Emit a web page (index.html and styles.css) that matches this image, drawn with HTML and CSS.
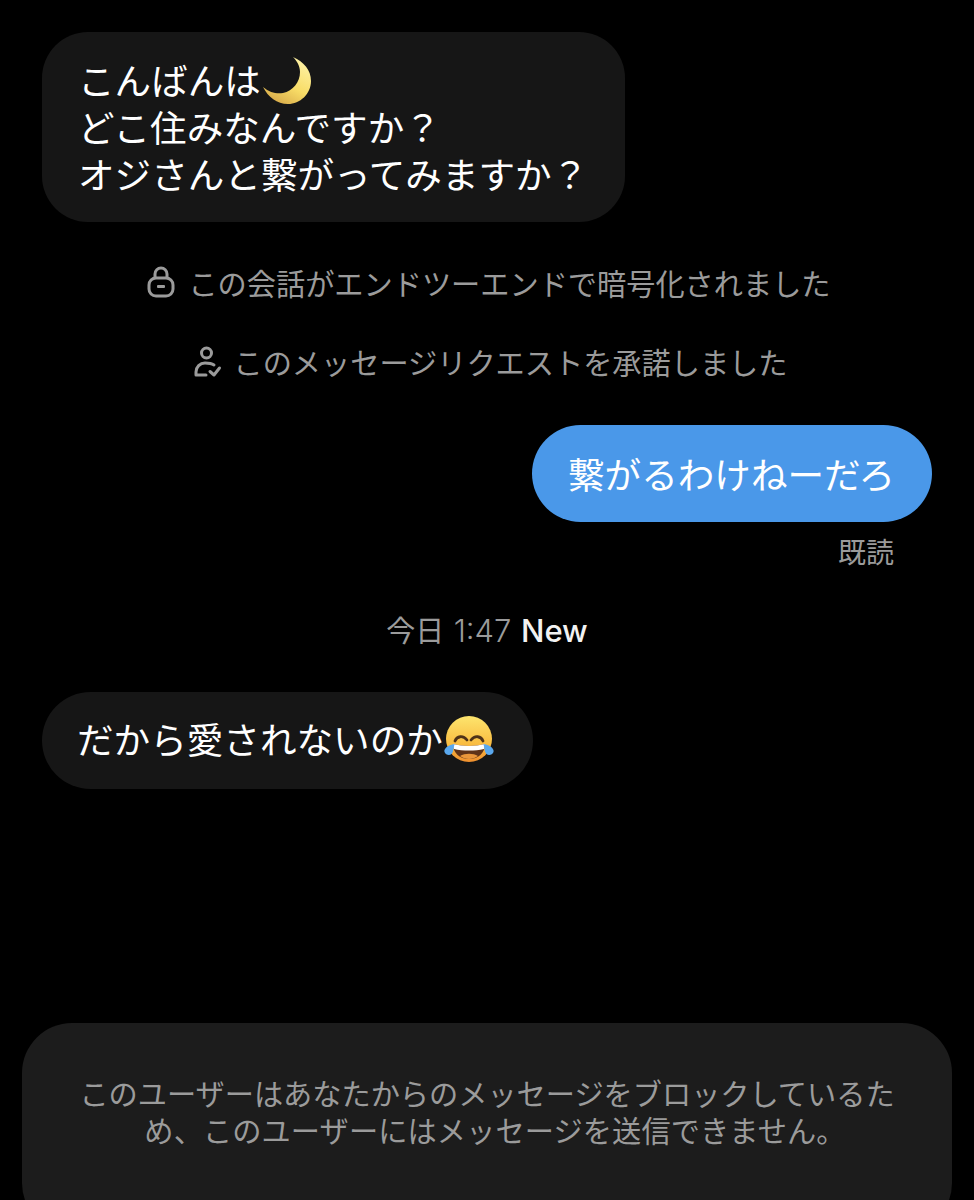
FILE: index.html
```html
<!DOCTYPE html>
<html lang="ja">
<head>
<meta charset="utf-8">
<title>メッセージ</title>
<link rel="stylesheet" href="styles.css">
</head>
<body>
<main class="chat">
  <div class="bubble incoming first">
    <div class="line">こんばんは<svg class="emoji moon" viewBox="0 0 52 52" aria-hidden="true"><defs><linearGradient id="moonFill" x1="0.8" y1="0.1" x2="0.3" y2="1"><stop offset="0" stop-color="#fdf0a0"/><stop offset="0.55" stop-color="#f8dc66"/><stop offset="1" stop-color="#d8ab4a"/></linearGradient></defs><path d="M31 2C42 7 49 15 49 26C49 39 38 49 26 49C15 49 6 42 1 32C8 38 15 39 21 38C31 36 38 27 38 17C38 11 35 6 31 2Z" fill="url(#moonFill)"/></svg></div>
    <div class="line">どこ住みなんですか？</div>
    <div class="line">オジさんと繋がってみますか？</div>
  </div>

  <div class="notice lock-notice">
    <svg class="notice-icon" viewBox="0 0 28 32" aria-hidden="true"><path d="M8 12V8a6 6 0 0 1 12 0v4" fill="none" stroke="#9b9b9b" stroke-width="3"/><rect x="2" y="12" width="24" height="18" rx="7" fill="none" stroke="#9b9b9b" stroke-width="3"/><rect x="10" y="19" width="8" height="3" rx="1" fill="#9b9b9b"/></svg>
    <span>この会話がエンドツーエンドで暗号化されました</span>
  </div>

  <div class="notice accept-notice">
    <svg class="notice-icon" viewBox="0 0 28 32" aria-hidden="true"><g fill="none" stroke="#9b9b9b" stroke-width="3" stroke-linecap="round" stroke-linejoin="round"><circle cx="13.500" cy="8" r="5"/><path d="M13 30H3v-3c0-5 4-9 9-9c3 0 6 0 9 2"/><path d="M17 26.500l4 3.500l5.500-7"/></g></svg>
    <span>このメッセージリクエストを承諾しました</span>
  </div>

  <div class="outgoing-row">
    <div class="bubble outgoing">繋がるわけねーだろ</div>
  </div>
  <div class="read-row">既読</div>

  <div class="timestamp">今日 <span class="latin">1:47</span> <strong class="latin new">New</strong></div>

  <div class="bubble incoming second">
    <div class="line">だから愛されないのか<svg class="emoji joy" viewBox="0 0 50 50" aria-hidden="true"><defs><linearGradient id="joyFill" x1="0" y1="0" x2="0" y2="1"><stop offset="0" stop-color="#fde56e"/><stop offset="0.6" stop-color="#f9bd42"/><stop offset="1" stop-color="#ee8f2e"/></linearGradient></defs><circle cx="25" cy="25" r="23" fill="url(#joyFill)"/><path d="M11 27c2-5 8-6 12-1" fill="none" stroke="#4e3218" stroke-width="2.800" stroke-linecap="round"/><path d="M27 26c4-5 10-4 12 1" fill="none" stroke="#4e3218" stroke-width="2.800" stroke-linecap="round"/><path d="M9 30c10 2.500 22 2.500 32 0c0 9-7 15-16 15S9 39 9 30Z" fill="#5e3218"/><path d="M9 30c10 2.500 22 2.500 32 0c0 2-0.300 3.500-1 5c-9 2-21 2-30 0c-0.700-1.500-1-3-1-5Z" fill="#fff"/><path d="M16 42c5-3 13-3 18 0c-5 4-13 4-18 0Z" fill="#e9963b"/><path d="M10.500 30c-1 4-1 8-3 10s-6 1-7-2s3-7 10-8Z" fill="#5aa8ee"/><path d="M39.500 30c1 4 1 8 3 10s6 1 7-2s-3-7-10-8Z" fill="#5aa8ee"/></svg></div>
  </div>

  <div class="blocked">
    <p>このユーザーはあなたからのメッセージをブロックしているた<br><span class="blocked-tail">め、このユーザーにはメッセージを送信できません。</span></p>
  </div>
</main>
</body>
</html>
```

FILE: styles.css
```css
* {
  box-sizing: border-box;
}

html,
body {
  margin: 0;
  height: 1200px;
  overflow: hidden;
  background: #000;
}

body {
  font-family: "Noto Sans CJK JP", "Liberation Sans", sans-serif;
  font-weight: 400;
  color: #fff;
}

.chat {
  display: flex;
  flex-direction: column;
  height: 1200px;
  padding-top: 32px;
}

.bubble {
  font-size: 36.6px;
  line-height: 47px;
}

.line {
  display: flex;
  align-items: center;
  height: 47px;
  white-space: nowrap;
}

.incoming {
  align-self: flex-start;
  margin-left: 42px;
  background: #161616;
}

.first {
  width: 583px;
  height: 190px;
  padding: 24px 0 0 36px;
  border-radius: 46px;
}

.second {
  width: 491px;
  height: 97px;
  margin-top: 43px;
  padding: 23px 0 0 35px;
  border-radius: 49px;
}

.emoji {
  flex: none;
  overflow: visible;
}

.moon {
  width: 52px;
  height: 52px;
  margin: 3px 0 0 1px;
}

.joy {
  width: 50px;
  height: 50px;
  margin: 1px 0 0 1.5px;
}

.notice {
  display: flex;
  align-items: center;
  justify-content: center;
  height: 40px;
  font-size: 29.2px;
  line-height: 40px;
  color: #9b9b9b;
  white-space: nowrap;
}

.lock-notice {
  margin-top: 40px;
  padding-left: 4px;
}

.accept-notice {
  margin-top: 39px;
  padding-left: 6px;
}

.notice-icon {
  flex: none;
  width: 28px;
  height: 32px;
  margin-right: 13px;
  overflow: visible;
}

.outgoing-row {
  display: flex;
  justify-content: flex-end;
  margin-top: 44px;
  padding-right: 42px;
}

.outgoing {
  width: 400px;
  height: 97px;
  padding: 25px 0 0 36px;
  border-radius: 49px;
  background: #4a98e9;
}

.read-row {
  height: 36px;
  margin-top: 11px;
  padding-right: 80px;
  font-size: 28px;
  line-height: 36px;
  text-align: right;
  color: #9b9b9b;
}

.timestamp {
  height: 40px;
  margin-top: 40px;
  font-size: 29px;
  line-height: 40px;
  text-align: center;
  word-spacing: 3px;
  color: #9b9b9b;
}

.latin {
  font-family: "Inter", sans-serif;
  font-size: 31px;
  font-weight: 300;
}

.new {
  font-weight: 500;
  color: #f2f2f2;
}

.blocked {
  flex: none;
  width: 930px;
  height: 210px;
  margin: auto 0 -33px 22px;
  padding: 51px 0 0;
  border-radius: 50px;
  background: #1c1c1c;
}

.blocked p {
  margin: 0;
  font-size: 29.2px;
  line-height: 37px;
  text-align: center;
  color: #9b9b9b;
}

.blocked-tail {
  padding-left: 16px;
  letter-spacing: 0.12px;
}
```
